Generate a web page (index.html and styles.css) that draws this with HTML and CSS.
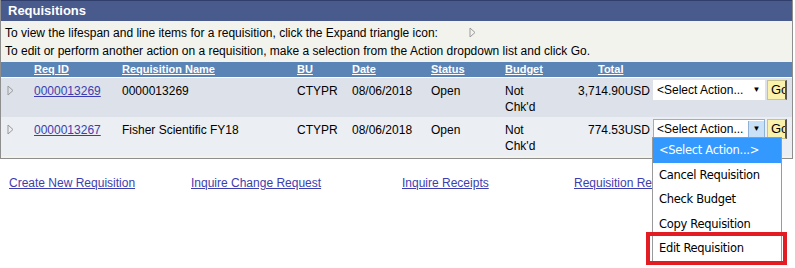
FILE: index.html
```html
<!DOCTYPE html>
<html lang="en">
<head>
  <meta charset="UTF-8">
  <title>Requisitions</title>
  <link rel="stylesheet" href="styles.css">
</head>
<body>

  <div class="box">
    <div class="title">Requisitions</div>
    <p class="hint">To view the lifespan and line items for a requisition, click the Expand triangle icon:
      <svg class="hint-tri" width="7" height="11" viewBox="0 0 7 11"><path d="M1 1 L6 5.5 L1 10 Z" fill="none" stroke="#999" stroke-width="1"/></svg>
    </p>
    <p class="hint">To edit or perform another action on a requisition, make a selection from the Action dropdown list and click Go.</p>

    <table class="grid">
      <colgroup>
        <col style="width:29px">
        <col style="width:88px">
        <col style="width:175px">
        <col style="width:55px">
        <col style="width:79px">
        <col style="width:74px">
        <col style="width:61px">
        <col style="width:90px">
        <col>
      </colgroup>
      <thead>
        <tr>
          <th></th>
          <th><a href="#">Req ID</a></th>
          <th><a href="#">Requisition Name</a></th>
          <th><a href="#">BU</a></th>
          <th><a href="#">Date</a></th>
          <th><a href="#">Status</a></th>
          <th><a href="#">Budget</a></th>
          <th class="th-total"><a href="#">Total</a></th>
          <th></th>
        </tr>
      </thead>
      <tbody>
        <tr class="odd">
          <td><svg class="tri" width="7" height="11" viewBox="0 0 7 11"><path d="M1 1 L6 5.5 L1 10 Z" fill="none" stroke="#999" stroke-width="1"/></svg></td>
          <td><a href="#">0000013269</a></td>
          <td>0000013269</td>
          <td>CTYPR</td>
          <td>08/06/2018</td>
          <td>Open</td>
          <td>Not<br>Chk'd</td>
          <td class="num">3,714.90USD</td>
          <td class="act">
            <div class="action">
              <div class="select"><span>&lt;Select Action...</span><span class="arrow">&#9660;</span></div>
              <div class="go">Go</div>
            </div>
          </td>
        </tr>
        <tr class="even">
          <td><svg class="tri" width="7" height="11" viewBox="0 0 7 11"><path d="M1 1 L6 5.5 L1 10 Z" fill="none" stroke="#999" stroke-width="1"/></svg></td>
          <td><a href="#">0000013267</a></td>
          <td>Fisher Scientific FY18</td>
          <td>CTYPR</td>
          <td>08/06/2018</td>
          <td>Open</td>
          <td>Not<br>Chk'd</td>
          <td class="num">774.53USD</td>
          <td class="act">
            <div class="action">
              <div class="select open"><span>&lt;Select Action...</span><span class="arrow">&#9660;</span></div>
              <div class="go">Go</div>
            </div>
          </td>
        </tr>
      </tbody>
    </table>
  </div>

  <div class="links">
    <a href="#">Create New Requisition</a>
    <a href="#">Inquire Change Request</a>
    <a href="#">Inquire Receipts</a>
    <a href="#">Requisition Report</a>
  </div>

  <!-- open dropdown of the second row -->
  <ul class="menu">
    <li class="picked">&lt;Select Action...&gt;</li>
    <li>Cancel Requisition</li>
    <li>Check Budget</li>
    <li>Copy Requisition</li>
    <li class="marked">Edit Requisition</li>
  </ul>

</body>
</html>
```

FILE: styles.css
```css
body {
  margin: 0;
  font-family: "Liberation Sans", Arial, sans-serif;
  font-size: 12px;
  color: #000;
  background: #fff;
  position: relative;
  width: 795px;
  height: 268px;
  overflow: hidden;
}
a {
  color: #3d3daf;
}
.box {
  width: 791px;
  border: 1px solid #8e8e8e;
  border-top: 0;
  background: #f3f3ee;
  padding-bottom: 2px;
}
.title {
  background: #485b8c;
  color: #fff;
  font-weight: bold;
  font-size: 13px;
  height: 20px;
  line-height: 20px;
  padding-left: 7px;
  border-top: 1px solid #2f3e6a;
}
.hint {
  margin: 0;
  height: 18px;
  line-height: 18px;
  padding-left: 4px;
}
.hint:first-of-type {
  margin-top: 3px;
}
.hint-tri {
  margin-left: 28px;
  vertical-align: -1px;
}
.grid {
  width: 100%;
  border-collapse: collapse;
  table-layout: fixed;
  margin-top: 2px;
}
.grid th {
  background: #5b84b6;
  height: 15px;
  padding: 0 4px;
  text-align: left;
  font-size: 11px;
  line-height: 15px;
  border-bottom: 1px solid #fff;
}
.grid th a {
  color: #fff;
}
.grid .th-total {
  padding-left: 36px;
}
.grid td {
  vertical-align: top;
  padding: 5px 4px 0;
  height: 34px;
  line-height: 16px;
  white-space: nowrap;
}
.grid tr.odd td {
  background: #dde2ea;
}
.grid tr.even td {
  background: #ebeef3;
}
.grid td.num {
  text-align: right;
  padding-right: 2px;
}
.grid td.act {
  padding: 2px 0 0 1px;
  overflow: hidden;
}
.tri {
  display: block;
  margin-top: 2px;
  margin-left: 2px;
}
.action {
  display: flex;
}
.select {
  width: 107px;
  height: 18px;
  background: #fff;
  border: 1px solid #fff;
  display: flex;
  justify-content: space-between;
  align-items: center;
  font-size: 12px;
  padding-left: 3px;
}
.select.open {
  border-color: #8fb1d6;
}
.select .arrow {
  font-size: 8px;
  width: 15px;
  height: 16px;
  line-height: 16px;
  text-align: center;
}
.select.open .arrow {
  background: #c9e1f6;
  border-left: 1px solid #8fb1d6;
}
.go {
  margin-left: 2px;
  width: 14px;
  height: 18px;
  background: #faf1ad;
  border: 1px solid #c9c28a;
  border-right: 2px solid #555;
  line-height: 18px;
  padding-left: 3px;
  overflow: hidden;
  white-space: nowrap;
  font-size: 13px;
}
.links {
  display: flex;
  padding: 17px 0 0 9px;
}
.links a:nth-child(1) { width: 182px; }
.links a:nth-child(2) { width: 211px; }
.links a:nth-child(3) { width: 172px; }
.menu {
  position: absolute;
  left: 652px;
  top: 137px;
  width: 128px;
  margin: 0;
  padding: 0;
  list-style: none;
  background: #fff;
  border: 1px solid #9a9a9a;
  font-family: "DejaVu Sans", sans-serif;
  font-size: 11.5px;
  letter-spacing: -0.3px;
}
.menu li {
  height: 24.5px;
  line-height: 24px;
  padding-left: 6px;
}
.menu li.picked {
  background: #3399ff;
  color: #fff;
}
.menu li.marked {
  outline: 4px solid #e31b23;
  margin: 0 -2px 0 -3px;
  padding-left: 9px;
}
```
